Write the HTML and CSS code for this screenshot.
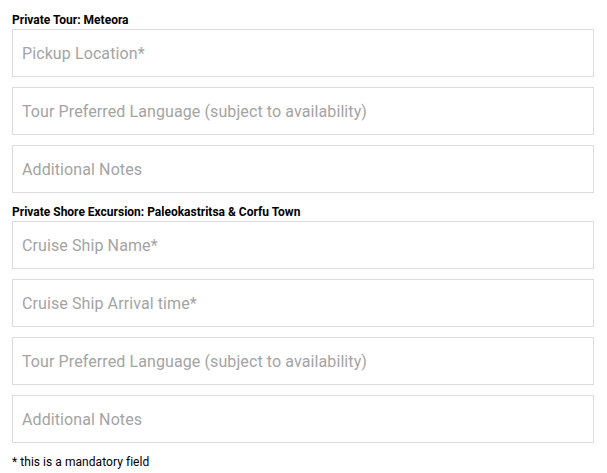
FILE: index.html
```html
<!DOCTYPE html>
<html>
<head>
<meta charset="utf-8">
<link rel="stylesheet" href="styles.css">
</head>
<body>
<form class="form">
  <div class="group-title">Private Tour: Meteora</div>
  <input class="field" type="text" placeholder="Pickup Location*">
  <input class="field" type="text" placeholder="Tour Preferred Language (subject to availability)">
  <input class="field" type="text" placeholder="Additional Notes">
  <div class="group-title">Private Shore Excursion: Paleokastritsa &amp; Corfu Town</div>
  <input class="field" type="text" placeholder="Cruise Ship Name*">
  <input class="field" type="text" placeholder="Cruise Ship Arrival time*">
  <input class="field" type="text" placeholder="Tour Preferred Language (subject to availability)">
  <input class="field" type="text" placeholder="Additional Notes">
  <div class="note">* this is a mandatory field</div>
</form>
</body>
</html>
```
FILE: styles.css
```css
html, body {
  margin: 0;
  padding: 0;
  background: #fff;
}
body {
  font-family: Roboto, "Liberation Sans", sans-serif;
  color: #000;
}
.form {
  display: flex;
  flex-direction: column;
  padding: 11px 13px 0 12px;
}
.group-title {
  font-size: 12px;
  font-weight: 700;
  line-height: 18px;
}
.field {
  box-sizing: border-box;
  width: 100%;
  height: 48px;
  margin: 0 0 10px 0;
  padding: 0 9px;
  border: 1px solid #dcdcdc;
  border-radius: 0;
  background: #fff;
  font-family: Roboto, "Liberation Sans", sans-serif;
  font-size: 16px;
  letter-spacing: 0.1px;
  color: #333;
  outline: none;
}
.field::placeholder {
  color: #a4a4a4;
  opacity: 1;
}
.note {
  font-size: 12px;
  line-height: 18px;
  letter-spacing: 0.05px;
}
```
